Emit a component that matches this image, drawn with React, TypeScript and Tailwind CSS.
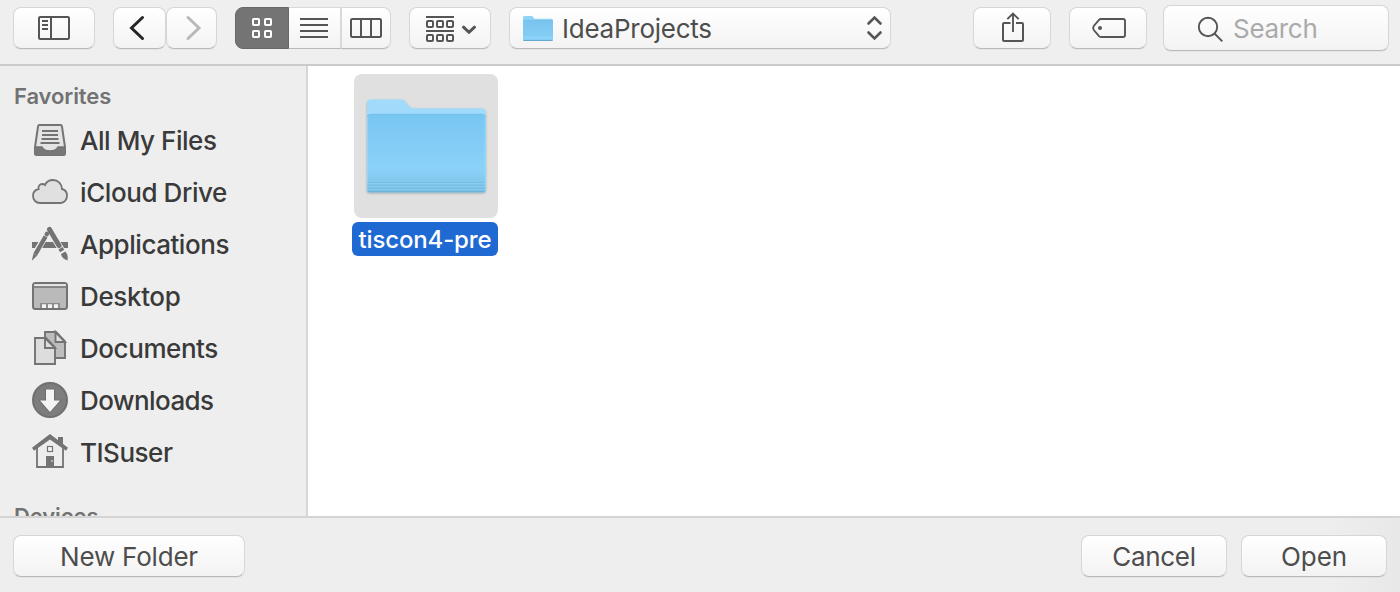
import type { ReactNode } from "react";

const BUTTON =
  "box-border flex shrink-0 items-center justify-center overflow-hidden rounded-lg border border-[#d6d6d6] border-b-[#b9b9b9] bg-linear-to-b from-white to-[#f3f3f3] shadow-[0_1px_0_rgba(0,0,0,0.04)]";

/** Draws its children in window coordinates, cropped to the given box. */
function Glyph({ box, children, color = "#555555", width = 2 }: {
  box: [number, number, number, number];
  children: ReactNode;
  color?: string;
  width?: number;
}) {
  return (
    <svg
      className="block shrink-0"
      width={box[2]}
      height={box[3]}
      viewBox={box.join(" ")}
      fill="none"
      stroke={color}
      strokeWidth={width}
    >
      {children}
    </svg>
  );
}

function Toolbar() {
  return (
    <header className="flex h-[66px] shrink-0 items-start border-b-2 border-[#cbcbcb] bg-[#efefef] pt-[7px] pl-[13px]">
      <button className={`${BUTTON} h-[42px] w-[82px]`} aria-label="Sidebar">
        <Glyph box={[14, 8, 80, 40]}>
          <rect x="39" y="17" width="30" height="22" rx="1.2" />
          <path d="M51 17V39" />
          <path d="M42 21H48M42 25H48M42 29H48" strokeWidth="1.8" />
        </Glyph>
      </button>

      <button className={`${BUTTON} ml-[18px] h-[42px] w-[53px]`} aria-label="Back">
        <Glyph box={[114, 8, 51, 40]} color="#252525" width={3}>
          <path d="M142.500 17.500L131.500 28L142.500 38.500" strokeLinecap="round" />
        </Glyph>
      </button>
      <button className={`${BUTTON} h-[42px] w-[51px]`} aria-label="Forward">
        <Glyph box={[167, 8, 49, 40]} color="#b8b8b8" width={3}>
          <path d="M188 17.500L199 28L188 38.500" strokeLinecap="round" />
        </Glyph>
      </button>

      <div className="ml-[18px] flex h-[42px] w-[156px] shrink-0">
        <button
          className="flex w-[54px] items-center justify-center rounded-l-lg border border-[#686868] bg-[#747474]"
          aria-label="Icons"
        >
          <Glyph box={[236, 8, 52, 40]} color="#ffffff">
            <rect x="253" y="19" width="6" height="6" rx="0.8" />
            <rect x="265" y="19" width="6" height="6" rx="0.8" />
            <rect x="253" y="31" width="6" height="6" rx="0.8" />
            <rect x="265" y="31" width="6" height="6" rx="0.8" />
          </Glyph>
        </button>
        <button
          className="flex w-[53px] items-center justify-center border-y border-r-2 border-[#d9d9d9] border-b-[#b9b9b9] bg-linear-to-b from-white to-[#f3f3f3]"
          aria-label="List"
        >
          <Glyph box={[289, 8, 51, 40]}>
            <path d="M300 19H328M300 25H328M300 31H328M300 37H328" />
          </Glyph>
        </button>
        <button
          className="flex w-[49px] items-center justify-center rounded-r-lg border-y border-r border-[#d6d6d6] border-b-[#b9b9b9] bg-linear-to-b from-white to-[#f3f3f3] shadow-[0_1px_0_rgba(0,0,0,0.04)]"
          aria-label="Columns"
        >
          <Glyph box={[342, 8, 48, 40]}>
            <rect x="351" y="19" width="30" height="18" rx="1.2" />
            <path d="M361 19V37M371 19V37" />
          </Glyph>
        </button>
      </div>

      <button className={`${BUTTON} ml-[18px] h-[42px] w-[82px]`} aria-label="Arrange">
        <Glyph box={[410, 8, 80, 40]}>
          <path d="M426 17H454M426 31H454" />
          <rect x="427" y="21" width="6" height="6" rx="1" />
          <rect x="437" y="21" width="6" height="6" rx="1" />
          <rect x="447" y="21" width="6" height="6" rx="1" />
          <rect x="427" y="35" width="6" height="6" rx="1" />
          <rect x="437" y="35" width="6" height="6" rx="1" />
          <rect x="447" y="35" width="6" height="6" rx="1" />
          <path d="M463.500 27.200L469 32.300L474.500 27.200" strokeWidth="3" strokeLinecap="round" />
        </Glyph>
      </button>

      <button className={`${BUTTON} ml-[18px] h-[42px] w-[382px]`}>
        <Glyph box={[510, 8, 52, 40]} width={0}>
          <defs>
            <linearGradient id="smallFolder" x1="0" y1="0" x2="0" y2="1">
              <stop offset="0" stopColor="#79c5ef" />
              <stop offset="1" stopColor="#87cff6" />
            </linearGradient>
          </defs>
          <path d="M523 40.500V17.500Q523 16 524.500 16H531.500Q532.500 16 533.200 17L534.300 18.700H551.500Q553 18.700 553 20.200V40.500Z" fill="#8fd3f8" />
          <path d="M523 21H553V39.500Q553 40.500 552 40.500H524Q523 40.500 523 39.500Z" fill="url(#smallFolder)" />
          <path d="M523.500 20.500H552.500" stroke="#69b5df" strokeWidth="0.7" />
          <path d="M523 37.300H553" stroke="#9edaf8" strokeWidth="0.7" />
          <path d="M523.500 40.500H552.500" stroke="#64a8d0" strokeWidth="1" />
        </Glyph>
        <span className="flex-1 pt-0.5 text-left leading-10 tracking-[-0.25px] whitespace-nowrap text-[#4d4d4d]">IdeaProjects</span>
        <Glyph box={[860, 8, 30, 40]} width={2.6}>
          <path d="M868.500 23.500L874.500 17.500L880.500 23.500M868.500 32.500L874.500 38.500L880.500 32.500" strokeLinecap="round" />
        </Glyph>
      </button>

      <button className={`${BUTTON} ml-[82px] h-[42px] w-[78px]`} aria-label="Share">
        <Glyph box={[974, 8, 76, 40]}>
          <path d="M1010.500 23H1004Q1003 23 1003 24V40Q1003 41 1004 41H1022Q1023 41 1023 40V24Q1023 23 1022 23H1016" />
          <path d="M1013 32V13.500M1007.300 19.200L1013 13.500L1018.700 19.200" strokeWidth="1.9" />
        </Glyph>
      </button>
      <button className={`${BUTTON} ml-[18px] h-[42px] w-[78px]`} aria-label="Tags">
        <Glyph box={[1070, 8, 76, 40]} width={1.9}>
          <path d="M1101 19H1123Q1125 19 1125 21V35Q1125 37 1123 37H1101Q1099.800 37 1099 36.200L1093.800 30Q1092.400 28 1093.800 26L1099 19.800Q1099.800 19 1101 19Z" />
          <circle cx="1100" cy="28" r="2" fill="#555555" stroke="none" />
        </Glyph>
      </button>
      <div className={`${BUTTON} -mt-0.5 ml-4 h-[46px] w-[226px]`}>
        <Glyph box={[1164, 6, 69, 44]} width={1.9}>
          <circle cx="1208" cy="27" r="9.200" />
          <path d="M1214.500 33.500L1222.300 41.300" />
        </Glyph>
        <span className="flex-1 pt-0.5 leading-[44px] tracking-[-0.3px] text-[#aaaaaa]">Search</span>
      </div>
    </header>
  );
}

const PLACES: { name: string; spacing: string; icon: ReactNode }[] = [
  {
    name: "All My Files",
    spacing: "tracking-[-0.46px]",
    icon: (
      <Glyph box={[30, 115, 50, 52]} color="#737373">
        <path d="M39.500 125H60.500Q61.700 125 61.900 126.200L65 147V153.500Q65 155 63.500 155H36.500Q35 155 35 153.500V147L38.100 126.200Q38.300 125 39.500 125Z" fill="#e4e4e4" />
        <path d="M42 131H58M42 135H58M41.500 139H58.500M40.500 143H59.500" strokeWidth="1.900" />
        <path d="M35 147H41.500Q44 151 50 151T58.500 147H65V153.500Q65 155 63.500 155H36.500Q35 155 35 153.500Z" fill="#777777" stroke="none" />
        <path d="M35 147H42Q44 151 50 151T58 147H65" strokeWidth="1.500" />
      </Glyph>
    ),
  },
  {
    name: "iCloud Drive",
    spacing: "tracking-[-0.42px]",
    icon: (
      <Glyph box={[30, 167, 50, 52]} color="#737373" width={1.8}>
        <path d="M40 203C36 203 33 200 33 196C33 192.500 35.300 189.700 38.600 189C37.900 186.500 39.700 184 42.200 184C43.300 184 44.200 184.300 45 185C46.300 182 49.400 180 53 180C58 180 62 184 62 189C65 189.600 67 192.300 67 195.800C67 200 64.200 203 60.500 203Z" fill="#e0e0e0" />
      </Glyph>
    ),
  },
  {
    name: "Applications",
    spacing: "tracking-[-0.46px]",
    icon: (
      <Glyph box={[30, 219, 50, 52]} color="#737373">
        <path d="M32 245H68" strokeWidth="6" />
        <path d="M47.200 233L34 256M49 229L64.500 255" stroke="#eeeeee" strokeWidth="6.400" />
        <path d="M45.600 236.500L35.300 254.300" strokeWidth="4.300" />
        <path d="M47 233.700L46.700 234.300" strokeWidth="4.300" strokeLinecap="round" />
        <path d="M33.500 253.500L37.200 255.600L32.200 260.500L32 259.700Z" fill="#737373" stroke="none" />
        <path d="M49.500 229.500L59 245.500" strokeWidth="5" strokeLinecap="round" />
        <path d="M60.500 248.200L62.200 251" strokeWidth="4.800" />
        <path d="M61 254L65.200 251.400C68 254.500 67.900 257 67.500 260.600C64.300 259.500 61.500 257.500 61 254Z" fill="#737373" stroke="none" />
      </Glyph>
    ),
  },
  {
    name: "Desktop",
    spacing: "tracking-[-0.36px]",
    icon: (
      <Glyph box={[30, 271, 50, 52]} color="#737373">
        <rect x="33" y="283" width="34" height="26" rx="2.500" fill="#bababa" />
        <path d="M34 285.200H66" stroke="#e7e7e7" strokeWidth="2" />
        <path d="M33 287H67" strokeWidth="1.700" />
        <path d="M40.500 308V303.500H59.500V308" fill="#8c8c8c" stroke="#8c8c8c" strokeWidth="1" />
        <path d="M42 304.200H46V308H42ZM48 304.200H52V308H48ZM54 304.200H58V308H54Z" fill="#f3f3f3" stroke="none" />
      </Glyph>
    ),
  },
  {
    name: "Documents",
    spacing: "tracking-[-0.43px]",
    icon: (
      <Glyph box={[30, 323, 50, 52]} color="#737373" width={1.9}>
        <path d="M45 332H56L65 341.500V358H45Z" fill="#bdbdbd" />
        <path d="M55.500 332V342H65Z" fill="#dedede" />
        <path d="M35 338H46L55 347.500V364H35Z" fill="#dddddd" />
        <path d="M45 338V348H55Z" fill="#dedede" />
      </Glyph>
    ),
  },
  {
    name: "Downloads",
    spacing: "tracking-[-0.56px]",
    icon: (
      <Glyph box={[30, 375, 50, 52]} color="#707070">
        <circle cx="50" cy="400" r="17" fill="#7d7d7d" />
        <path d="M46 389.500H54V400.500H60L50 412L40 400.500H46Z" fill="#f4f4f4" stroke="#6c6c6c" strokeWidth="1.600" paintOrder="stroke" />
      </Glyph>
    ),
  },
  {
    name: "TISuser",
    spacing: "tracking-[-0.48px]",
    icon: (
      <Glyph box={[30, 427, 50, 52]} color="#737373">
        <path d="M37 447L50 437L63 447V467H37Z" fill="#ededed" strokeWidth="1.800" />
        <path d="M58 437H63V447L58 443Z" fill="#737373" stroke="none" />
        <path d="M50 434L68 447.800L66 450.700L50 439.500L34 450.700L32 447.800Z" fill="#737373" stroke="none" />
        <rect x="47.500" y="446.500" width="5" height="5" fill="#f5f5f5" strokeWidth="1.200" />
        <path d="M46 456H54V467H46Z" fill="#737373" stroke="none" />
        <path d="M52 460V462" stroke="#eeeeee" strokeWidth="1" />
      </Glyph>
    ),
  },
];

function Sidebar() {
  return (
    <nav className="flex w-[308px] shrink-0 flex-col overflow-hidden border-r-2 border-[#d6d6d6] bg-[#eeeeee]">
      <h2 className="mt-[14px] h-[35px] shrink-0 pl-[14px] text-[22px] leading-[32px] font-semibold tracking-[-0.1px] text-[#727272]">
        Favorites
      </h2>
      <ul className="shrink-0">
        {PLACES.map((place) => (
          <li key={place.name} className="flex h-[52px] items-center pl-[30px]">
            {place.icon}
            <span className={`font-medium whitespace-nowrap text-[#3a3a3a] ${place.spacing}`}>{place.name}</span>
          </li>
        ))}
      </ul>
      <h2 className="mt-[21px] h-[34px] shrink-0 pl-[14px] text-[22px] leading-[32px] font-semibold tracking-[-0.1px] text-[#727272]">
        Devices
      </h2>
    </nav>
  );
}

function FolderTile() {
  return (
    <div className="mt-2 ml-11 flex w-[146px] flex-col items-end">
      <div className="h-36 w-36 rounded-lg bg-[#e0e0e0]">
        <Glyph box={[354, 74, 144, 144]} width={0}>
          <defs>
            <linearGradient id="folderFront" x1="0" y1="0" x2="0" y2="1">
              <stop offset="0" stopColor="#78c6f3" />
              <stop offset="0.7" stopColor="#8bd2f8" />
              <stop offset="0.86" stopColor="#83c8ee" />
              <stop offset="1" stopColor="#77bce3" />
            </linearGradient>
            <filter id="folderShade" x="-10%" y="-10%" width="120%" height="125%">
              <feDropShadow dx="0" dy="1" stdDeviation="0.9" floodColor="#000000" floodOpacity="0.3" />
            </filter>
          </defs>
          <path d="M367 103.500Q367 99.500 371 99.500H401.500Q404 99.500 405.700 101.700L409.200 106.300Q410.600 108.300 413 108.300H481.500Q485.600 108.300 485.600 112.300V190Q485.600 192.300 483 192.300H369.600Q367 192.300 367 190Z" fill="#a1dbfb" filter="url(#folderShade)" />
          <path d="M367 117.500Q367 114 370.500 114H482Q485.600 114 485.600 117.500V190Q485.600 192.300 483 192.300H369.600Q367 192.300 367 190Z" fill="url(#folderFront)" />
          <path d="M367.500 117Q368 114.200 370.500 114.200H482Q484.800 114.200 485.100 117" stroke="#72bce8" strokeWidth="0.600" />
          <path d="M367.500 117V190M485.100 117V190" stroke="#8eddff" strokeWidth="0.800" />
          <path d="M367.500 182.500H485M367.500 185.500H485M367.500 188.500H485" stroke="#74b9e0" strokeWidth="0.800" />
          <path d="M367.500 183.400H485M367.500 186.400H485M367.500 189.400H485" stroke="#91d3f6" strokeWidth="0.700" />
          <path d="M368.500 191.800H484" stroke="#68acd3" strokeWidth="0.900" />
        </Glyph>
      </div>
      <div className="mt-1 flex h-[34px] w-[146px] items-center justify-center rounded-md bg-[#1f69d2] pt-0.5 text-[24px] font-medium tracking-[-0.15px] whitespace-nowrap text-white">
        tiscon4-pre
      </div>
    </div>
  );
}

export default function App() {
  return (
    <div className="flex h-[592px] w-[1400px] flex-col overflow-hidden bg-[#eeeeee] font-['Inter',sans-serif] text-[26px] leading-8">
      <Toolbar />
      <div className="flex h-[450px] shrink-0 overflow-hidden">
        <Sidebar />
        <main className="flex-1 bg-white">
          <FolderTile />
        </main>
      </div>
      <footer className="flex h-[76px] shrink-0 items-start border-t-2 border-[#d4d4d4] bg-linear-to-r from-[#eeeeee] from-95% to-[#e8e8e8] pt-[17px] pr-[13px] pl-[13px] text-[#4d4d4d]">
        <button className={`${BUTTON} h-[42px] w-[232px] pt-0.5 tracking-[-0.2px]`}>New Folder</button>
        <button className={`${BUTTON} ml-auto h-[42px] w-[146px] pt-0.5 tracking-[-0.3px]`}>Cancel</button>
        <button className={`${BUTTON} ml-[14px] h-[42px] w-[146px] pt-0.5 tracking-[-0.1px]`}>Open</button>
      </footer>
    </div>
  );
}
